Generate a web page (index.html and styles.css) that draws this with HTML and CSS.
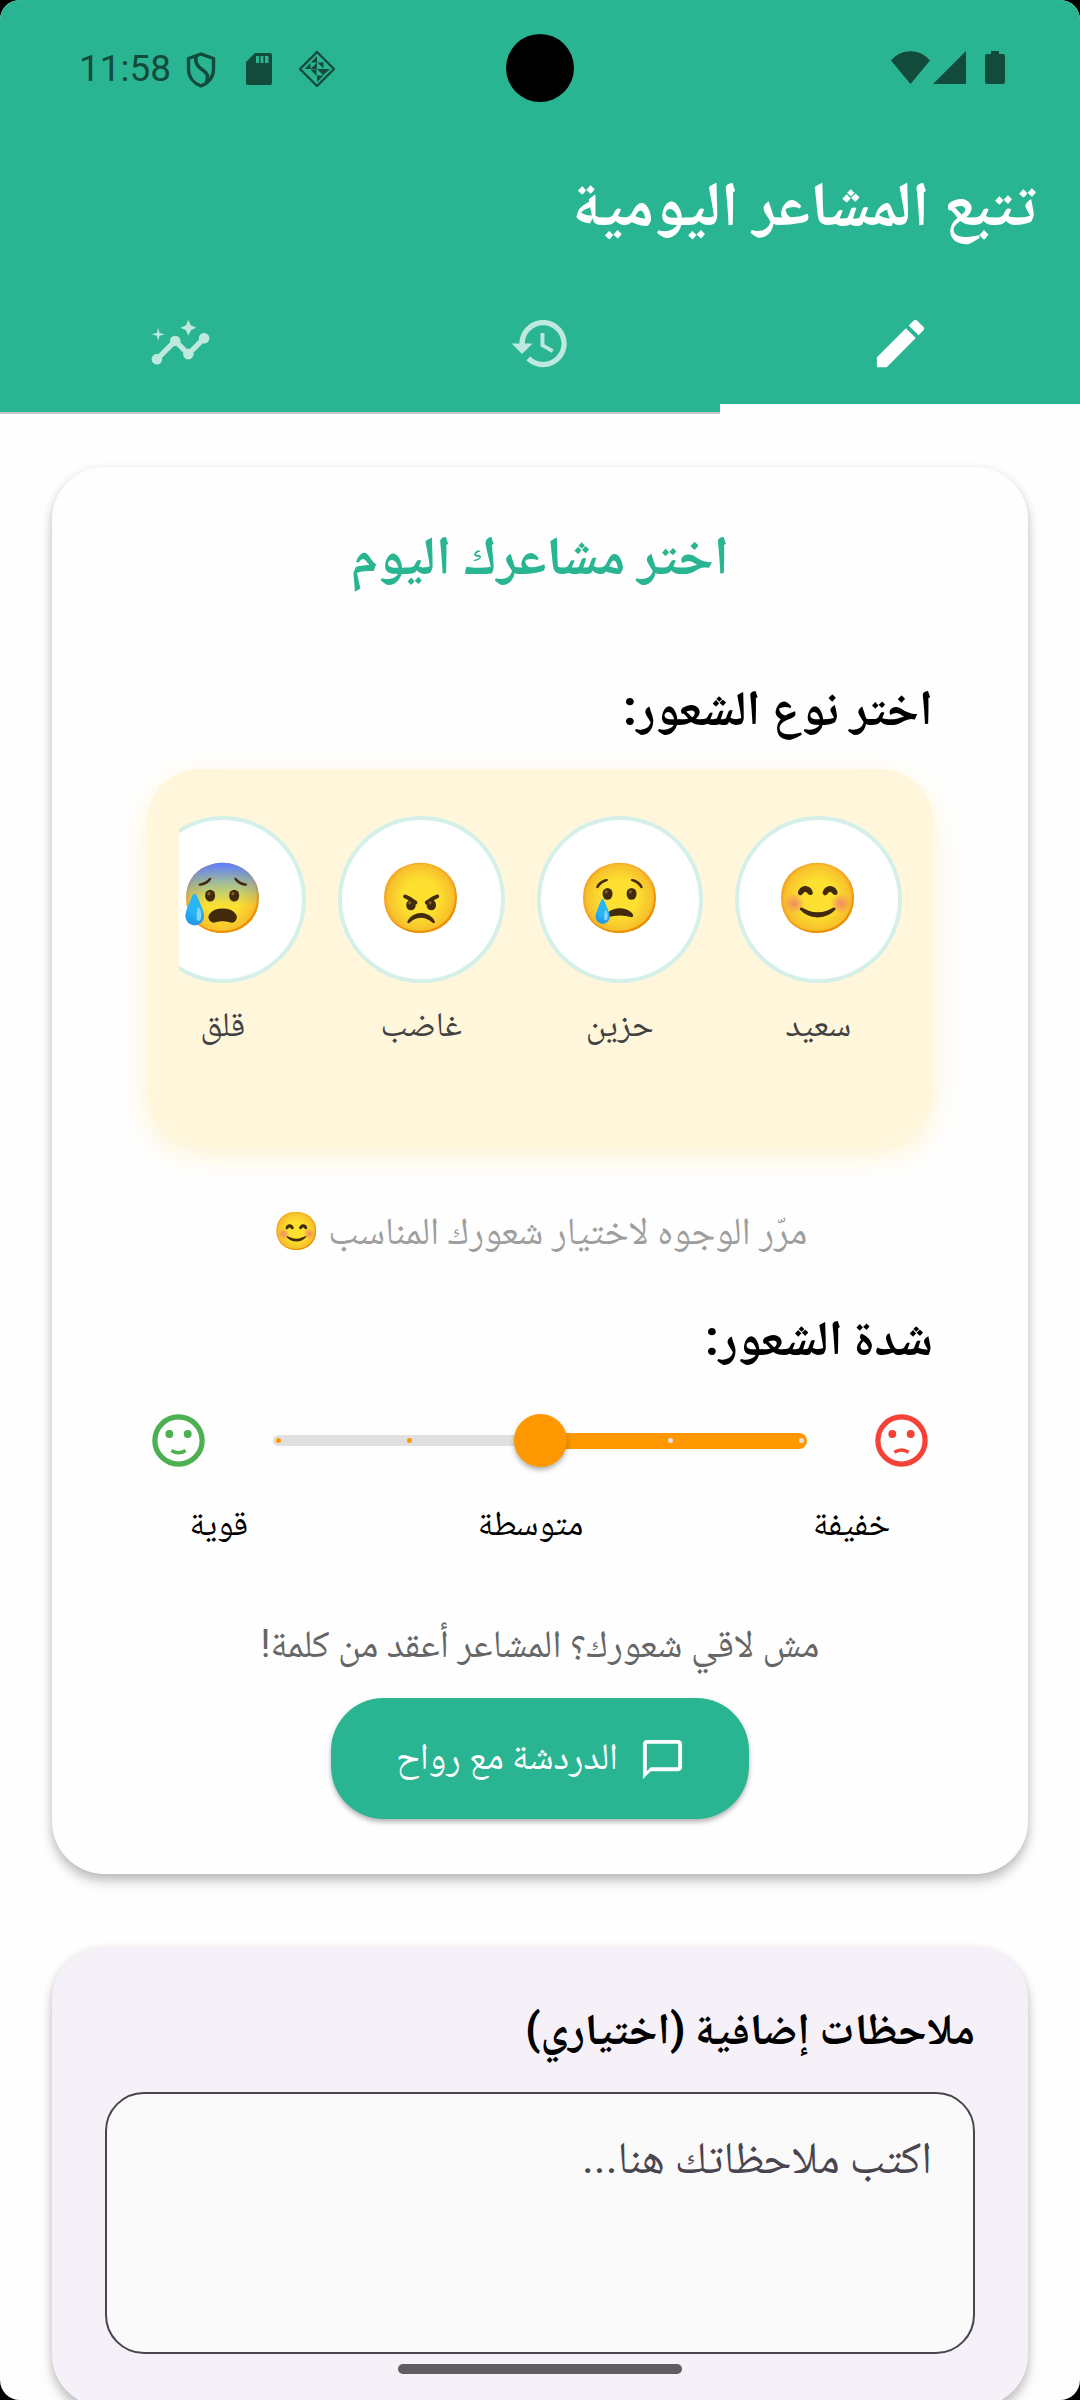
FILE: index.html
```html
<!DOCTYPE html>
<html lang="ar" dir="rtl">
<head>
<meta charset="utf-8">
<title>تتبع المشاعر اليومية</title>
<link rel="stylesheet" href="styles.css">
</head>
<body>
<div class="screen">
  <header class="header">
    <div class="statusbar" dir="ltr">
      <div class="status-left">
        <span class="clock">11:58</span>
        <svg class="ic-shield" viewBox="0 0 30 36"><path d="M15 2 27.500 6.500V17C27.500 25.500 22 31.500 15 34 8 31.500 2.500 25.500 2.500 17V6.500Z" fill="none" stroke="currentColor" stroke-width="3.400" stroke-linejoin="round"/><path d="M10 4C9 11 11 14 16 17.500 21.500 21 23 24 20.500 31" fill="none" stroke="currentColor" stroke-width="3.600"/></svg>
        <svg class="ic-sd" viewBox="0 0 26 32"><path fill-rule="evenodd" d="M9 0H24a2 2 0 0 1 2 2V30a2 2 0 0 1-2 2H2a2 2 0 0 1-2-2V9ZM10 3V10H13V3ZM14.500 3V10H17.500V3ZM19 3V10H22.500V3Z" fill="currentColor"/></svg>
        <svg class="ic-diamond" viewBox="0 0 38 38"><path d="M19 2 36 19 19 36 2 19Z" fill="none" stroke="currentColor" stroke-width="2.400" stroke-linejoin="round"/><path d="M19 6V12.500H13ZM19 12.500V19H12.500ZM6.500 19 12.500 13V19ZM12.500 19.500H18.500V26ZM19 19H25.500V25.500ZM19 25.500H25.500L19 32ZM25.500 19H32L25.500 25ZM19.500 12.500H25.500V18.500Z" fill="currentColor"/></svg>
      </div>
      <span class="camera"></span>
      <div class="status-right">
        <svg class="ic-wifi" viewBox="0 0 39 33"><path d="M0 9.500C10-3 29-3 39 9.500L19.500 33Z" fill="currentColor"/></svg>
        <svg class="ic-signal" viewBox="0 0 33 33"><path d="M33 0V33H0Z" fill="currentColor"/></svg>
        <svg class="ic-battery" viewBox="0 0 20 33"><path d="M6 0h8v3h4a2 2 0 0 1 2 2v26a2 2 0 0 1-2 2H2a2 2 0 0 1-2-2V5a2 2 0 0 1 2-2h4Z" fill="currentColor"/></svg>
      </div>
    </div>
    <h1 class="title">تتبع المشاعر اليومية</h1>
    <nav class="tabs">
      <a class="tab tab-active"><svg class="icon" viewBox="0 0 24 24"><path d="M3 17.250V21h3.750L17.810 9.940l-3.750-3.750L3 17.250zM20.710 7.040c.39-.39.39-1.020 0-1.410l-2.340-2.340c-.39-.39-1.020-.39-1.410 0l-1.830 1.830 3.750 3.750 1.830-1.830z"/></svg></a>
      <a class="tab"><svg class="icon" viewBox="0 0 24 24"><path d="M13 3c-4.970 0-9 4.030-9 9H1l3.890 3.890.07.14L9 12H6c0-3.870 3.130-7 7-7s7 3.130 7 7-3.130 7-7 7c-1.930 0-3.680-.79-4.940-2.060l-1.420 1.420C8.270 19.990 10.510 21 13 21c4.970 0 9-4.030 9-9s-4.030-9-9-9zm-1 5v5l4.280 2.540.72-1.210-3.500-2.080V8H12z"/></svg></a>
      <a class="tab"><svg class="icon" viewBox="0 0 24 24"><path d="M21 8c-1.450 0-2.260 1.440-1.930 2.510l-3.550 3.560c-.3-.09-.74-.09-1.040 0l-2.550-2.550C12.270 10.450 11.460 9 10 9c-1.450 0-2.270 1.440-1.930 2.520l-4.560 4.550C2.440 15.740 1 16.550 1 18c0 1.100.9 2 2 2 1.450 0 2.260-1.440 1.930-2.510l4.550-4.560c.3.09.74.09 1.040 0l2.550 2.550C12.730 16.550 13.540 18 15 18c1.450 0 2.270-1.440 1.930-2.520l3.560-3.550c1.070.33 2.510-.48 2.510-1.930 0-1.100-.9-2-2-2z"/><path d="M15 9l.94-2.070L18 6l-2.060-.93L15 3l-.92 2.070L12 6l2.080.93zM3.500 11L4 9l2-.5L4 8l-.5-2L3 8l-2 .5L3 9z"/></svg></a>
    </nav>
  </header>

  <main class="content">
    <section class="card mood-card">
      <h2 class="card-title">اختر مشاعرك اليوم</h2>
      <h3 class="label label-type">اختر نوع الشعور<span class="mark">:</span></h3>
      <div class="picker">
        <div class="moods">
          <div class="mood"><span class="face">😊</span><span class="mood-name">سعيد</span></div>
          <div class="mood"><span class="face">😢</span><span class="mood-name">حزين</span></div>
          <div class="mood"><span class="face">😠</span><span class="mood-name">غاضب</span></div>
          <div class="mood"><span class="face">😰</span><span class="mood-name">قلق</span></div>
        </div>
      </div>
      <p class="hint">مرّر الوجوه لاختيار شعورك المناسب <span class="hint-emoji">😊</span></p>
      <h3 class="label label-level">شدة الشعور<span class="mark">:</span></h3>
      <div class="slider-row">
        <svg class="smiley red" viewBox="0 0 24 24"><circle cx="12" cy="12" r="9"/><path d="M9.300 16.500Q12 14.800 14.700 16.500"/><circle class="eye" cx="8.500" cy="9.500" r="1.500"/><circle class="eye" cx="15.500" cy="9.500" r="1.500"/></svg>
        <div class="slider">
          <span class="track-on"></span><span class="track-off"></span>
          <div class="ticks"><i class="tick light"></i><i class="tick light"></i><i class="thumb"></i><i class="tick"></i><i class="tick"></i></div>
        </div>
        <svg class="smiley green" viewBox="0 0 24 24"><circle cx="12" cy="12" r="9"/><path d="M9.300 15.800Q12 17.500 14.700 15.800"/><circle class="eye" cx="8.500" cy="9.500" r="1.500"/><circle class="eye" cx="15.500" cy="9.500" r="1.500"/></svg>
      </div>
      <div class="levels"><span>خفيفة</span><span>متوسطة</span><span>قوية</span></div>
      <p class="question">مش لاقي شعورك؟ المشاعر أعقد من كلمة<span class="mark">!</span></p>
      <button class="chat">
        <svg class="ic-chat" viewBox="0 0 24 24"><path d="M20 2H4c-1.100 0-2 .9-2 2v18l4-4h14c1.100 0 2-.9 2-2V4c0-1.100-.9-2-2-2zm0 14H6l-2 2V4h16v12z"/></svg>
        <span>الدردشة مع رواح</span>
      </button>
    </section>

    <section class="card notes-card">
      <h3 class="notes-title">ملاحظات إضافية <span class="mark">(</span>اختياري<span class="mark">)</span></h3>
      <div class="notes-field">اكتب ملاحظاتك هنا<span class="mark">...</span></div>
    </section>
  </main>
  <span class="home-bar"></span>
</div>
</body>
</html>
```

FILE: styles.css
```css
* { box-sizing: border-box; margin: 0; padding: 0; }
html { background: #000; }
body {
  width: 1080px;
  height: 2400px;
  overflow: hidden;
  background: #000;
  font-family: "Noto Naskh Arabic", "Noto Sans", sans-serif;
}
.screen {
  position: relative;
  width: 1080px;
  height: 2400px;
  overflow: hidden;
  border-radius: 20px;
  background: #fefefe;
}
svg { display: block; flex: none; }
.mark { font-family: Roboto, sans-serif; line-height: 1; }

/* Header */
.header { height: 414px; background: #2ab592; border-bottom: 2px solid #cac4d0; }
.statusbar {
  position: relative;
  display: flex;
  justify-content: space-between;
  height: 137px;
  padding: 50px 75px 0 79px;
  color: #124a3c;
}
.status-left, .status-right { display: flex; align-items: flex-start; }
.clock { width: 107px; font: 400 37px/37px Roboto, sans-serif; }
.ic-shield { width: 30px; height: 36px; margin-top: 2px; }
.ic-sd { width: 26px; height: 32px; margin: 3px 0 0 30px; }
.ic-diamond { width: 38px; height: 38px; margin-left: 26px; }
.camera {
  position: absolute;
  left: 506px;
  top: 34px;
  width: 68px;
  height: 68px;
  border-radius: 50%;
  background: #000;
}
.status-right { padding-top: 1px; }
.ic-wifi { width: 39px; height: 33px; }
.ic-signal { width: 33px; height: 33px; margin-left: 3px; }
.ic-battery { width: 20px; height: 33px; margin-left: 19px; }
.title {
  height: 151px;
  padding-right: 44px;
  font-size: 62.900px;
  font-weight: 700;
  line-height: 151px;
  color: #fff;
}
.tabs { display: flex; height: 126px; }
.tab {
  display: flex;
  flex: 1;
  justify-content: center;
  height: 126px;
  padding-top: 24px;
  color: rgba(255, 255, 255, 0.7);
}
.tab-active { color: #fff; border-bottom: 10px solid #fefefe; }
.icon { width: 63px; height: 63px; fill: currentColor; }

/* Cards */
.content { display: flex; flex-direction: column; gap: 73px; padding: 53px 52.500px 0 52px; }
.card { border-radius: 52.500px; box-shadow: 0 8px 12px rgba(0, 0, 0, 0.2), 0 2px 10px rgba(0, 0, 0, 0.1); }
.mood-card {
  display: flex;
  flex-direction: column;
  height: 1407px;
  padding: 53px 94.500px 0 95px;
  background: #fefefe;
}
.card-title {
  font-size: 54.300px;
  font-weight: 700;
  line-height: 84px;
  text-align: center;
  color: #2ab592;
}
.label { font-size: 49.300px; font-weight: 700; line-height: 64px; color: #000; }
.label-type { margin-top: 78px; }
.label-level { margin-top: 46px; }
.picker {
  height: 376px;
  margin-top: 23px;
  padding: 47px 31.500px 0;
  border-radius: 52.500px;
  background: #fff6dc;
  box-shadow: 0 10px 28px rgba(255, 215, 90, 0.28);
}
.moods { display: flex; gap: 32px; overflow: hidden; padding-bottom: 20px; }
.mood { display: flex; flex: none; flex-direction: column; align-items: center; width: 166.500px; }
.face {
  display: flex;
  align-items: center;
  justify-content: center;
  width: 166.500px;
  height: 167px;
  padding-bottom: 2px;
  border: 4px solid #d4f0e9;
  border-radius: 50%;
  background: #fff;
  font-family: "Noto Color Emoji", sans-serif;
  font-size: 68.500px;
  line-height: 74px;
}
.mood-name { margin-top: 17px; font-size: 34.500px; line-height: 58px; color: #424242; }
.hint {
  height: 60px;
  margin-top: 61px;
  font-size: 38.500px;
  line-height: 60px;
  text-align: center;
  white-space: nowrap;
  color: #9e9e9e;
}
.hint-emoji { font-size: 37.500px; line-height: 1; }

/* Slider */
.slider-row { display: flex; align-items: center; gap: 63px; margin-top: 33px; }
.smiley { width: 63px; height: 63px; fill: none; stroke: currentColor; stroke-width: 2; }
.smiley path { stroke-width: 1.300; }
.smiley .eye { fill: currentColor; stroke: none; }
.red { color: #f44336; }
.green { color: #4caf50; }
.slider { position: relative; display: flex; flex: 1; align-items: center; height: 63px; }
.track-on { flex: 1; height: 16px; border-radius: 0 8px 8px 0; background: #ff9800; }
.track-off { flex: 1; height: 11px; border-radius: 6px 0 0 6px; background: #e0e0e0; }
.ticks {
  position: absolute;
  inset: 0;
  display: flex;
  align-items: center;
  justify-content: space-between;
  padding: 0 3px;
}
.tick { width: 5px; height: 5px; border-radius: 50%; background: #ff9800; }
.light { background: #e0e0e0; }
.thumb {
  width: 53px;
  height: 53px;
  margin: 0 -24px;
  border-radius: 50%;
  background: #ff9800;
  box-shadow: 0 3px 5px rgba(0, 0, 0, 0.3);
}
.levels {
  display: flex;
  justify-content: space-between;
  margin-top: 31px;
  padding: 0 42.500px;
  font-size: 34.900px;
  line-height: 50px;
  color: #000;
}
.question {
  margin-top: 66px;
  font-size: 38.700px;
  line-height: 60px;
  text-align: center;
  white-space: nowrap;
  color: #666;
}
.chat {
  display: flex;
  align-items: center;
  align-self: center;
  gap: 21px;
  width: 418px;
  height: 121px;
  margin-top: 19px;
  padding: 2px 63px 0;
  border: 0;
  border-radius: 52.500px;
  background: #2ab592;
  box-shadow: 0 3px 5px rgba(0, 0, 0, 0.3);
  font-family: inherit;
  font-size: 37.400px;
  line-height: 60px;
  white-space: nowrap;
  color: #fff;
}
.chat span { padding-top: 2px; }
.ic-chat { width: 47px; height: 47px; fill: currentColor; }

/* Notes */
.notes-card { height: 460px; padding: 53px 52.500px 0 53px; background: #f6f1f9; }
.notes-title { font-size: 43.800px; font-weight: 700; line-height: 70px; }
.notes-field {
  height: 262px;
  margin-top: 22px;
  padding: 35px 41px;
  border: 2.500px solid #49454f;
  border-radius: 39px;
  background: #fafafa;
  font-size: 45px;
  line-height: 70px;
  color: #49454f;
}
.home-bar {
  position: absolute;
  left: 398px;
  bottom: 26px;
  width: 284px;
  height: 10px;
  border-radius: 5px;
  background: #605d62;
}
```
